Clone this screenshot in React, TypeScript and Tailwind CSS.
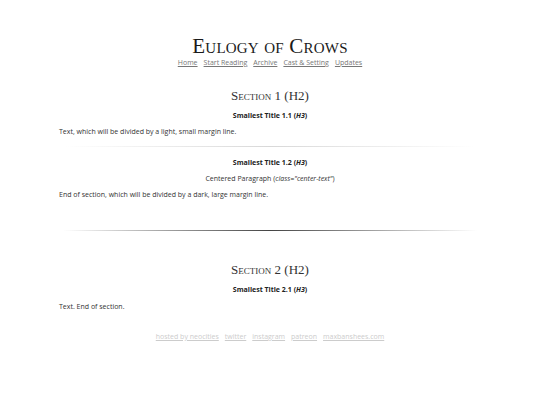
import React from 'react';

const navLinks = ['Home', 'Start Reading', 'Archive', 'Cast & Setting', 'Updates'];
const footerLinks = ['hosted by neocities', 'twitter', 'instagram', 'patreon', 'maxbanshees.com'];

const serif = "font-['Liberation_Serif',serif] [font-variant:small-caps]";

const H3 = ({ num }: { num: string }) => (
  <h3 className="text-center font-bold text-[7px] leading-[10px] text-[#222]">
    Smallest Title {num} (<i>H3</i>)
  </h3>
);

export default function App() {
  return (
    <div className="min-h-[405px] bg-white font-['Open_Sans',sans-serif] text-[#333] text-[7px] leading-[10px]">
      <div className="mx-auto w-[422px] pt-[34px]">
        <header className="text-center">
          <h1 className={`${serif} text-[21px] leading-[24px] tracking-[0.2px] text-[#1a1a1a]`}>Eulogy of Crows</h1>
          <nav className="flex justify-center gap-[6px]">
            {navLinks.map(l => (
              <a key={l} href="#" className="underline text-[#777]">{l}</a>
            ))}
          </nav>
        </header>

        <section className="mt-[20px]">
          <h2 className={`${serif} text-center text-[13px] leading-[16px] text-[#333]`}>Section 1 (H2)</h2>
          <div className="mt-[7px]"><H3 num="1.1" /></div>
          <p className="mt-[6px]">Text, which will be divided by a light, small margin line.</p>
          <hr className="mx-[6px] mt-[9px] h-px border-0 bg-gradient-to-r from-transparent via-[#d8d8d8] to-transparent" />
          <div className="mt-[11px]"><H3 num="1.2" /></div>
          <p className="mt-[6px] text-center">Centered Paragraph (<i>class="center-text"</i>)</p>
          <p className="mt-[6px]">End of section, which will be divided by a dark, large margin line.</p>
        </section>

        <hr className="mx-[4px] mt-[30px] h-px border-0 bg-gradient-to-r from-transparent via-[#444] to-transparent" />

        <section className="mt-[31px]">
          <h2 className={`${serif} text-center text-[13px] leading-[16px] text-[#333]`}>Section 2 (H2)</h2>
          <div className="mt-[7px]"><H3 num="2.1" /></div>
          <p className="mt-[7px]">Text. End of section.</p>
        </section>

        <footer className="mt-[20px] flex justify-center gap-[6px]">
          {footerLinks.map(l => (
            <a key={l} href="#" className="underline text-[#ccc]">{l}</a>
          ))}
        </footer>
      </div>
    </div>
  );
}
